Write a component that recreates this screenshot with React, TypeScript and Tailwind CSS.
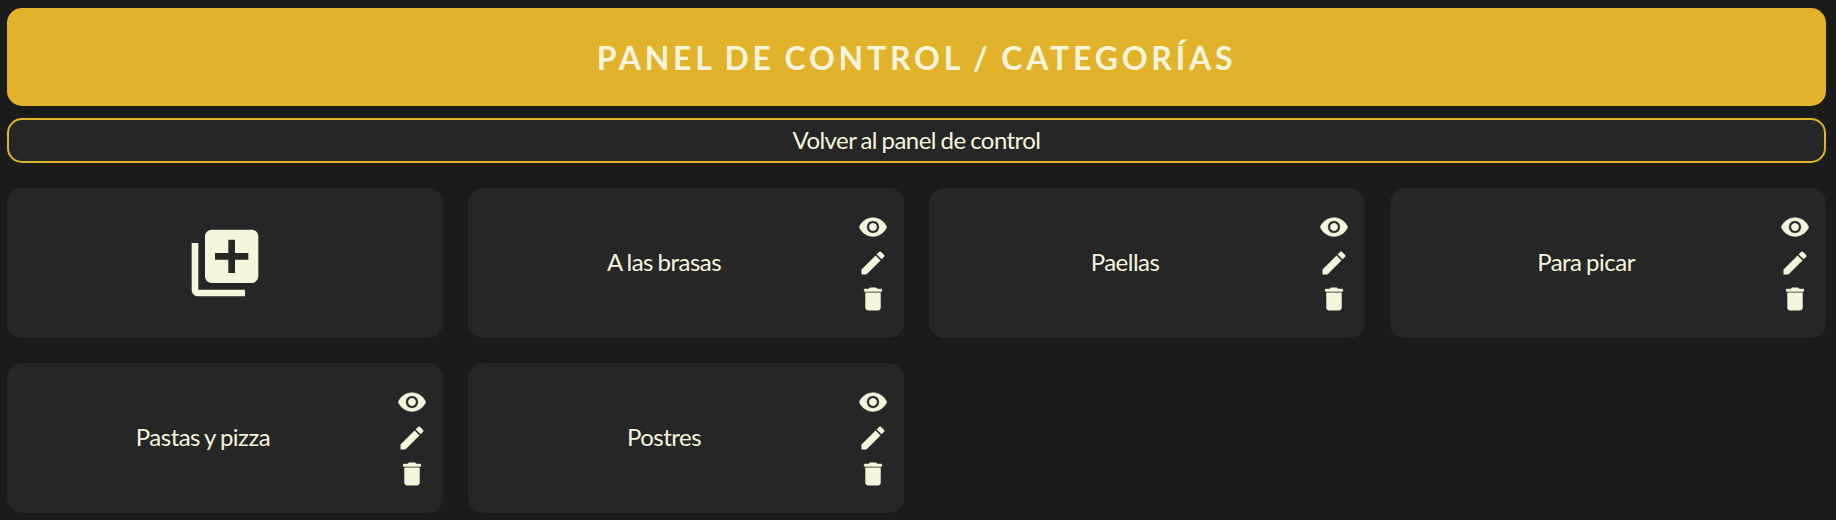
import { MdDelete, MdEdit, MdLibraryAdd, MdVisibility } from "react-icons/md";

const categories = ["A las brasas", "Paellas", "Para picar", "Pastas y pizza", "Postres"];

const iconClass = "size-[30px] [&>path[fill=none]]:hidden";

function CategoryCard({ name }: { name: string }) {
  return (
    <article className="flex h-[150px] items-center rounded-[15px] bg-[#262626] pr-4">
      <h2 className="flex-1 pb-0.5 pl-0.5 text-center text-2xl tracking-[-0.52px] [word-spacing:-1px]">{name}</h2>
      <div className="flex flex-col gap-1.5">
        <button aria-label="Ver"><MdVisibility className={iconClass} strokeWidth={0.35} /></button>
        <button aria-label="Editar"><MdEdit className={iconClass} strokeWidth={0.35} /></button>
        <button aria-label="Eliminar"><MdDelete className={iconClass} strokeWidth={0.35} /></button>
      </div>
    </article>
  );
}

export default function App() {
  return (
    <main className="min-h-[520px] bg-[#1b1b1b] pt-2 pr-2.5 pl-[7px] font-['Lato',sans-serif] text-[#f5f5dc]">
      <header className="flex h-[98px] items-center justify-center rounded-[15px] bg-[#e2b22b] pt-0.5">
        <h1 className="text-[32px] font-bold tracking-[3.78px] uppercase [word-spacing:-1.8px]">Panel de control / Categorías</h1>
      </header>
      <a className="mt-3 flex h-[45px] items-center justify-center rounded-[15px] border-2 border-[#e2b22b] bg-[#262626] pb-0.5 text-2xl tracking-[-0.55px] [word-spacing:-1px]">
        Volver al panel de control
      </a>
      <section className="mt-[25px] grid grid-cols-4 gap-[25px]">
        <button aria-label="Añadir categoría" className="flex h-[150px] items-center justify-center rounded-[15px] bg-[#262626]">
          <MdLibraryAdd className="size-20" />
        </button>
        {categories.map((name) => (
          <CategoryCard key={name} name={name} />
        ))}
      </section>
    </main>
  );
}
